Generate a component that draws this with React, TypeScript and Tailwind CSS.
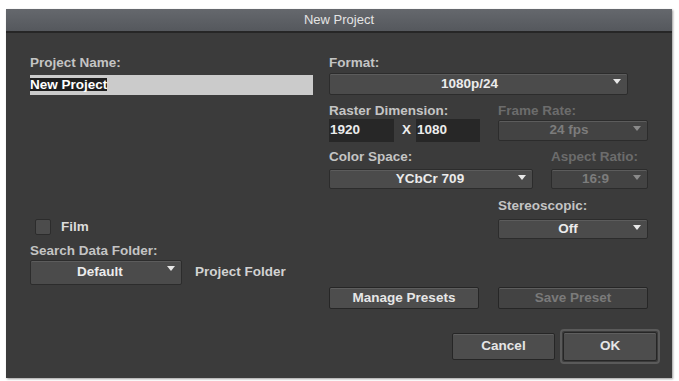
const font = { fontFamily: '"Liberation Sans", Arial, sans-serif' };

function Arrow({ dim = false }: { dim?: boolean }) {
  return (
    <svg width="8" height="6" viewBox="0 0 8 6" className="absolute right-[6px] top-[5px]">
      <path d="M0 0 L8 0 L4 5 Z" fill={dim ? '#8a8a8a' : '#e8e8e8'} />
    </svg>
  );
}

interface SelectProps {
  value: string;
  width: string;
  height: string;
  dim?: boolean;
  shift?: string;
}

function Select({ value, width, height, dim = false, shift = '' }: SelectProps) {
  return (
    <div
      className={`relative flex items-center justify-center rounded-[2px] border border-[#2c2c2c] shadow-[inset_0_1px_0_#5c5c5c] ${width} ${height} ${
        dim ? 'bg-[#434343] text-[#7c7c7c]' : 'bg-[#4b4b4b] text-[#ececec]'
      }`}
    >
      <span className={shift}>{value}</span>
      <Arrow dim={dim} />
    </div>
  );
}

function Label({ text, dim = false }: { text: string; dim?: boolean }) {
  return (
    <div className={`h-[14px] leading-[14px] whitespace-nowrap ${dim ? 'text-[#6c6c6c]' : 'text-[#c4c4c4]'}`}>
      {text}
    </div>
  );
}

function Button({ text, width, height, dim = false }: { text: string; width: string; height: string; dim?: boolean }) {
  return (
    <div
      className={`flex items-center justify-center rounded-[2px] border border-[#262626] shadow-[inset_0_1px_0_#5e5e5e] ${width} ${height} ${
        dim ? 'bg-[#434343] text-[#7a7a7a]' : 'bg-[#4d4d4d] text-[#e6e6e6]'
      }`}
    >
      {text}
    </div>
  );
}

export default function App() {
  return (
    <div className="w-[679px] h-[381px] bg-white pt-[9px] pl-[6px] overflow-hidden" style={font}>
      <div className="w-[666px] h-[369px] bg-[#3b3b3b] flex flex-col text-[13.5px] font-bold shadow-[1px_1px_2px_#9a9a9a]">
        {/* Title bar */}
        <div className="h-[22px] bg-gradient-to-b from-[#65686d] to-[#55585d] flex items-center justify-center text-[#e4e4e4] text-[13px] font-normal">
          New Project
        </div>
        <div className="h-[2px] bg-[#262626]" />

        <div className="flex">
          {/* Left column */}
          <div className="w-[323px] pl-[24px] pt-[23px] flex flex-col">
            <Label text="Project Name:" />
            <div className="mt-[5px] h-[20px] w-[283px] bg-[#cbcbcb]">
              <span className="inline-block h-[13px] leading-[13px] bg-[#1e1e1e] text-white">New Project</span>
            </div>

            <div className="mt-[124px] flex items-center h-[16px]">
              <div className="ml-[5px] w-[16px] h-[16px] bg-[#4c4c4c] border border-[#2c2c2c] rounded-[2px]" />
              <span className="ml-[10px] text-[#dcdcdc]">Film</span>
            </div>
            <div className="mt-[9px]">
              <Label text="Search Data Folder:" />
            </div>
            <div className="mt-[2px] flex items-center">
              <Select value="Default" width="w-[152px]" height="h-[25px]" shift="-ml-[12px]" />
              <span className="ml-[13px] text-[#d2d2d2]">Project Folder</span>
            </div>
          </div>

          {/* Right column */}
          <div className="w-[319px] pt-[23px] flex flex-col">
            <Label text="Format:" />
            <div className="mt-[3px]">
              <Select value="1080p/24" width="w-[299px]" height="h-[22px]" shift="-ml-[18px]" />
            </div>

            <div className="mt-[9px] flex">
              <div className="w-[169px] flex flex-col">
                <Label text="Raster Dimension:" />
                <div className="mt-[1px] flex items-center text-[#ececec]">
                  <div className="w-[65px] h-[23px] bg-[#272727] pl-[1px] flex items-center">1920</div>
                  <span className="ml-[8px] w-[14px]">X</span>
                  <div className="w-[64px] h-[23px] bg-[#272727] pl-[1px] flex items-center">1080</div>
                </div>
              </div>
              <div className="flex flex-col">
                <Label text="Frame Rate:" dim />
                <div className="mt-[2px]">
                  <Select value="24 fps" width="w-[150px]" height="h-[21px]" dim shift="-ml-[8px]" />
                </div>
              </div>
            </div>

            <div className="mt-[8px] flex">
              <div className="w-[222px] flex flex-col">
                <Label text="Color Space:" />
                <div className="mt-[5px]">
                  <Select value="YCbCr 709" width="w-[204px]" height="h-[20px]" shift="-ml-[2px]" />
                </div>
              </div>
              <div className="flex flex-col">
                <Label text="Aspect Ratio:" dim />
                <div className="mt-[5px]">
                  <Select value="16:9" width="w-[97px]" height="h-[20px]" dim shift="-ml-[8px]" />
                </div>
              </div>
            </div>

            <div className="mt-[10px] ml-[169px] flex flex-col">
              <Label text="Stereoscopic:" />
              <div className="mt-[6px]">
                <Select value="Off" width="w-[150px]" height="h-[20px]" shift="-ml-[10px]" />
              </div>
            </div>

            <div className="mt-[48px] flex gap-[19px]">
              <Button text="Manage Presets" width="w-[150px]" height="h-[22px]" />
              <Button text="Save Preset" width="w-[150px]" height="h-[22px]" dim />
            </div>
          </div>
        </div>

        {/* Bottom buttons */}
        <div className="mt-[20px] flex items-center justify-end pr-[12px]">
          <Button text="Cancel" width="w-[103px]" height="h-[27px]" />
          <div className="ml-[5px] w-[100px] h-[35px] rounded-[4px] border-[2px] border-[#5a5a5a] p-[1px] flex">
            <Button text="OK" width="w-full" height="h-full" />
          </div>
        </div>
      </div>
    </div>
  );
}
